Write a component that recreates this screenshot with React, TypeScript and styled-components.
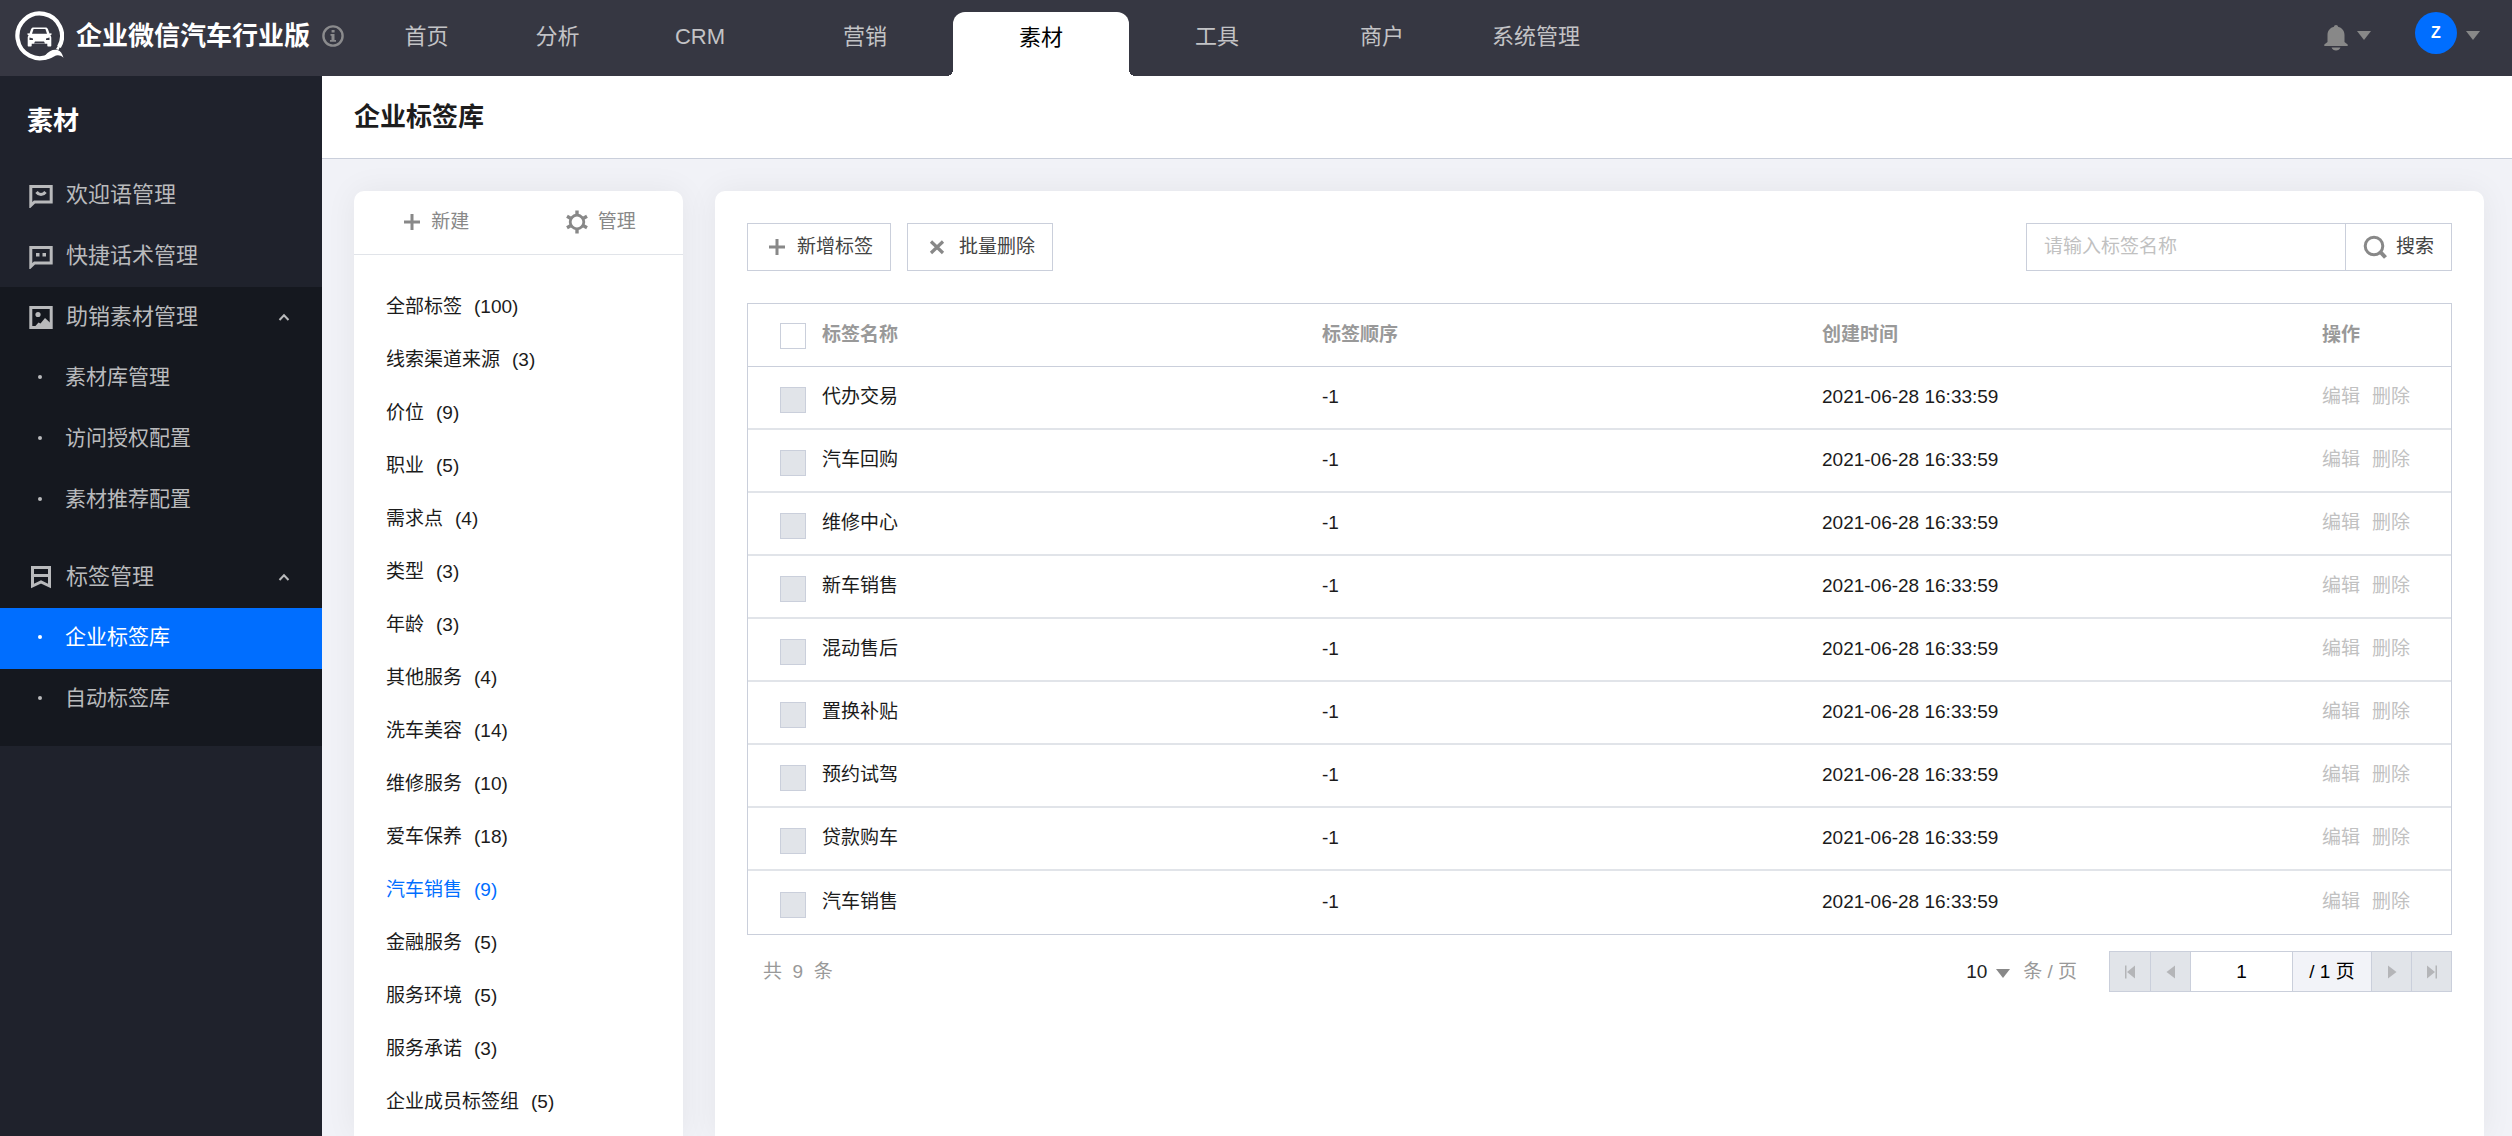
import React from "react";
import styled, { createGlobalStyle, css } from "styled-components";

const c = {
  header: "#363742",
  side: "#1f222c",
  sideDark: "#15181f",
  blue: "#006eff",
  page: "#f1f2f7",
  line: "#cacfdb",
  lineSoft: "#e1e4e9",
  ink: "#1b1b1b",
  gray: "#888888",
  mute: "#c1c1c1",
};

const Global = createGlobalStyle`
  *, *::before, *::after { box-sizing: border-box; }
  html, body { margin: 0; }
  body {
    background: ${c.page};
    color: ${c.ink};
    font-family: "Liberation Sans", "Noto Sans CJK SC", sans-serif;
    font-size: 19px;
    line-height: 28px;
  }
  button, input, select { font: inherit; color: inherit; }
  ul { list-style: none; margin: 0; padding: 0; }
  a { color: inherit; text-decoration: none; }
`;

const Shell = styled.div`
  display: flex;
  flex-direction: column;
  min-height: 100vh;
`;

const TopBar = styled.header`
  display: flex;
  height: 76px;
  background: ${c.header};
  color: #c3c3c6;
`;

const Brand = styled.div`
  display: flex;
  align-items: center;
  width: 361px;
  padding: 0 0 4px 14px;
  svg { flex: none; }
`;

const BrandName = styled.h1`
  margin: 0 12px;
  color: #fff;
  font-size: 26px;
  line-height: 36px;
  font-weight: 700;
  white-space: nowrap;
`;

const Nav = styled.nav`
  display: flex;
`;

const NavLink = styled.a<{ $w: number; $active?: boolean }>`
  width: ${(p) => p.$w}px;
  padding-top: 21px;
  text-align: center;
  font-size: 22px;
  line-height: 32px;
  ${(p) =>
    p.$active &&
    css`
      position: relative;
      margin-top: 12px;
      padding-top: 10px;
      border-radius: 12px 12px 0 0;
      background: #fff;
      color: #000;
      &::before,
      &::after {
        content: "";
        position: absolute;
        bottom: 0;
        width: 6px;
        height: 6px;
      }
      &::before {
        left: -6px;
        background: radial-gradient(circle at 0 0, transparent 6px, #fff 6px);
      }
      &::after {
        right: -6px;
        background: radial-gradient(circle at 100% 0, transparent 6px, #fff 6px);
      }
    `}
`;

const Account = styled.div`
  display: flex;
  align-items: flex-start;
  gap: 44px;
  margin-left: auto;
  padding: 12px 32px 0 0;
`;

const IconButton = styled.button`
  display: flex;
  align-items: center;
  gap: 9px;
  height: 42px;
  padding: 0;
  border: 0;
  background: none;
  && { color: ${c.gray}; }
  svg { margin-top: 4px; }
  svg:first-child { margin-top: 9px; }
`;

const Avatar = styled.span`
  display: grid;
  place-items: center;
  width: 42px;
  height: 42px;
  border-radius: 50%;
  background: ${c.blue};
  color: #fff;
  font-size: 16px;
  font-weight: 700;
`;

const Body = styled.div`
  display: flex;
  flex: 1;
`;

const Sidebar = styled.aside`
  flex: none;
  width: 322px;
  background: ${c.side};
  color: #b9babc;
`;

const SideTitle = styled.h2`
  margin: 0;
  padding: 25px 27px 24px;
  color: #fff;
  font-size: 26px;
  line-height: 40px;
`;

const SideItem = styled.a`
  display: flex;
  align-items: center;
  height: 61px;
  padding: 0 32px 2px 28px;
  font-size: 22px;
  line-height: 32px;
  svg:first-child { flex: none; margin-right: 12px; }
`;

const SideToggle = styled(SideItem).attrs({ as: "button" })`
  width: 100%;
  border: 0;
  background: none;
  color: inherit;
  font-size: 22px;
  text-align: left;
  svg:last-child { margin-left: auto; }
`;

const SideGroup = styled.section`
  padding-bottom: 16px;
  background: ${c.sideDark};
`;

const SubItem = styled.a<{ $active?: boolean }>`
  display: flex;
  align-items: center;
  height: 61px;
  padding: 0 0 4px 38px;
  font-size: 21px;
  background: ${(p) => (p.$active ? c.blue : "transparent")};
  color: ${(p) => (p.$active ? "#fff" : "inherit")};
  &::before {
    content: "";
    width: 4px;
    height: 4px;
    margin-right: 23px;
    border-radius: 2px;
    background: currentColor;
  }
`;

const Main = styled.main`
  display: flex;
  flex-direction: column;
  flex: 1;
  min-width: 0;
`;

const PageTitle = styled.div`
  display: flex;
  align-items: center;
  height: 83px;
  padding: 0 32px;
  border-bottom: 1px solid ${c.line};
  background: #fff;
  h2 { margin: 0; color: #1d1d1d; font-size: 26px; line-height: 40px; }
`;

const Columns = styled.div`
  display: flex;
  flex: 1;
  gap: 32px;
  padding: 32px 28px 0 32px;
`;

const Card = styled.section`
  border-radius: 10px 10px 0 0;
  background: #fff;
  box-shadow: 0 0 32px rgba(0, 0, 0, 0.06);
`;

const GroupCard = styled(Card)`
  flex: none;
  width: 329px;
`;

const GroupTools = styled.div`
  display: flex;
  height: 64px;
  border-bottom: 1px solid ${c.lineSoft};
`;

const GroupTool = styled.button`
  display: flex;
  flex: 1;
  align-items: center;
  justify-content: center;
  gap: 10px;
  padding: 0 0 2px;
  border: 0;
  background: none;
  && { color: ${c.gray}; }
`;

const GroupList = styled.ul`
  padding: 25px 32px 0;
`;

const GroupLink = styled.a<{ $active?: boolean }>`
  display: flex;
  gap: 12px;
  line-height: 53px;
  color: ${(p) => (p.$active ? c.blue : c.ink)};
`;

const TagCard = styled(Card)`
  flex: 1;
  min-width: 0;
  padding: 32px;
`;

const Toolbar = styled.div`
  display: flex;
  gap: 16px;
  margin-bottom: 32px;
`;

const OutlineButton = styled.button`
  display: flex;
  align-items: center;
  gap: 11px;
  height: 48px;
  padding: 0 17px 0 20px;
  border: 1px solid ${c.line};
  background: #fff;
  && { color: #444; }
  svg { color: ${c.gray}; }
`;

const Search = styled.form`
  display: flex;
  margin-left: auto;
  ${OutlineButton} { gap: 9px; border-left: 0; padding: 0 17px; }
`;

const SearchInput = styled.input`
  width: 320px;
  height: 48px;
  padding: 0 17px;
  border: 1px solid ${c.line};
  outline: 0;
  &::placeholder { color: ${c.mute}; opacity: 1; }
`;

const Table = styled.table`
  width: 100%;
  table-layout: fixed;
  border-collapse: separate;
  border-spacing: 0;
  border: 1px solid ${c.line};
  text-align: left;
`;

const Col = styled.col<{ $w?: number }>`
  ${(p) => p.$w && `width: ${p.$w}px;`}
`;

const Th = styled.th`
  height: 63px;
  padding: 0;
  border-bottom: 1px solid ${c.line};
  color: #999;
  font-weight: 700;
`;

const Td = styled.td`
  height: 63px;
  padding: 0 0 2px;
  border-bottom: 2px solid ${c.lineSoft};
  tr:last-child > & { border-bottom: 0; }
`;

const Check = styled.input`
  display: block;
  appearance: none;
  width: 26px;
  height: 26px;
  margin: 2px 0 0 32px;
  border: 1px solid ${c.line};
  background: #fff;
  &:disabled { margin-top: 6px; background: ${c.lineSoft}; }
`;

const RowAction = styled.button`
  margin-right: 12px;
  padding: 0;
  border: 0;
  background: none;
  && { color: ${c.mute}; }
`;

const Footer = styled.div`
  display: flex;
  align-items: center;
  margin-top: 16px;
  padding-left: 16px;
  color: #999;
`;

const PageSize = styled.label`
  display: flex;
  align-items: center;
  margin-left: auto;
  margin-right: 32px;
`;

const SizeSelect = styled.span`
  display: flex;
  align-items: center;
  gap: 8px;
  margin-right: 13px;
  color: ${c.gray};
  select {
    appearance: none;
    width: 22px;
    padding: 0;
    border: 0;
    background: none;
    color: #222;
  }
  svg { margin-top: 4px; }
`;

const Pager = styled.div`
  display: flex;
  height: 41px;
  border: 1px solid ${c.line};
  color: #000;
  && > * + * { border-left: 1px solid ${c.line}; }
`;

const PagerButton = styled.button`
  display: grid;
  place-items: center;
  width: 40px;
  padding: 0;
  border: 0;
  background: ${c.lineSoft};
  && { color: #b4b5b8; }
`;

const PagerInput = styled.input`
  width: 102px;
  padding: 0;
  border: 0;
  text-align: center;
`;

const PagerTotal = styled.span`
  display: grid;
  place-items: center;
  width: 79px;
  background: #f2f3f8;
`;

const Svg = ({ w, h = w, children }: { w: number; h?: number; children: React.ReactNode }) => (
  <svg width={w} height={h} viewBox={`0 0 ${w} ${h}`} fill="none" aria-hidden="true">
    {children}
  </svg>
);

const Logo = () => (
  <Svg w={50}>
    <path d="M36 44.600A22.300 22.300 0 1 1 45 36" stroke="#fff" strokeWidth="4.200" />
    <path
      d="M31 44.500c4-4.500 8-6.500 12.500-5.500 3.200.8 4.500 3.500 6 7.700-3.500-3-6.500-3-9.500-1.200-4 2.300-7.500 3.700-12.500 3.500z"
      fill="#fff"
    />
    <path d="M42 38l3.500-5.500 1.500.8-2.500 5.700z" fill="#fff" />
    <path
      d="M19.500 16.500h12c1.300 0 2 .6 2.400 1.600l1.600 4.400 2-.3v1.600l-1.200.5c.7.700 1 1.500 1 2.700v7.500c0 .7-.4 1-1 1h-2c-.6 0-1-.3-1-1v-1.800H17.700v1.800c0 .7-.4 1-1 1h-2c-.6 0-1-.3-1-1V27c0-1.200.3-2 1-2.700l-1.200-.5v-1.600l2 .3 1.600-4.400c.4-1 1.100-1.600 2.400-1.600z"
      fill="#fff"
    />
    <path d="M19.600 18h11.800l1.600 4.800H18zM21 30.500h9l1 2H20z" fill={c.header} />
    <path d="M15.500 26.500l3.500 1v1.500h-3.500zM35.500 26.500l-3.500 1v1.500h3.500z" fill={c.header} />
  </Svg>
);

const InfoIcon = () => (
  <Svg w={22}>
    <circle cx="11" cy="11" r="9.600" stroke="#8b8b8d" strokeWidth="2.400" />
    <path d="M9.600 5h3v2.600h-3zM8.500 9h4v6h1.500v1.800H8V15h1.500v-4.300h-1z" fill="#8b8b8d" />
  </Svg>
);

const Caret = () => (
  <Svg w={14} h={9}>
    <path d="M0 0h14L7 9z" fill="currentColor" />
  </Svg>
);

const Bell = () => (
  <Svg w={24} h={26}>
    <path
      d="M12 0c1.200 0 2 .8 2 1.800 4 1 6.500 4 6.500 8.200v7l3.200 2.500V21H.3v-1.500L3.500 17v-7c0-4.200 2.500-7.200 6.500-8.200C10 .8 10.800 0 12 0z"
      fill="currentColor"
    />
    <path d="M7.500 22.500h9c-.7 2-2.500 3-4.500 3s-3.800-1-4.500-3z" fill="currentColor" />
  </Svg>
);

const WelcomeIcon = () => (
  <Svg w={26}>
    <path d="M2.800 23.500V4.500h20.400v15.500H6.500z" stroke="currentColor" strokeWidth="3" />
    <path d="M8.500 10c2.500 3.400 6.500 3.400 9 0" stroke="currentColor" strokeWidth="3" />
  </Svg>
);

const ScriptIcon = () => (
  <Svg w={26}>
    <path d="M2.800 23.500V4.500h20.400v15.500H6.500z" stroke="currentColor" strokeWidth="3" />
    <path d="M8 10h3.500v3.500H8zM14.500 10H18v3.500h-3.500z" fill="currentColor" />
  </Svg>
);

const MaterialIcon = () => (
  <Svg w={26}>
    <path d="M2.800 3.500h20.400v20H2.800z" stroke="currentColor" strokeWidth="3" />
    <circle cx="10" cy="10.500" r="2.600" fill="currentColor" />
    <path d="M7 22.500l3.500-4 2 1 4.500-5.500 6.500 6v3.500z" fill="currentColor" />
  </Svg>
);

const LabelIcon = () => (
  <Svg w={26}>
    <path
      d="M4.500 3.500v18.500L13 18l8.500 4V3.500zM4.500 11.500h17"
      stroke="currentColor"
      strokeWidth="3"
    />
  </Svg>
);

const ChevronUp = () => (
  <Svg w={12} h={8}>
    <path d="M1.500 7L6 2.200 10.500 7" stroke="currentColor" strokeWidth="2" />
  </Svg>
);

const Plus = () => (
  <Svg w={18}>
    <path d="M9 1v16M1 9h16" stroke="currentColor" strokeWidth="3" />
  </Svg>
);

const Cross = () => (
  <Svg w={20} h={16}>
    <path d="M3 2.500l12 11.500M15 2.500L3 14" stroke="currentColor" strokeWidth="3.200" />
  </Svg>
);

const Gear = () => (
  <Svg w={22} h={24}>
    <circle cx="11" cy="12" r="6.800" stroke="currentColor" strokeWidth="2.800" />
    <path
      d="M11 .5v4M11 19.500v4M1 6.300l3.500 2M17.500 15.700l3.500 2M1 17.700l3.500-2M17.500 8.300l3.500-2"
      stroke="currentColor"
      strokeWidth="3.400"
    />
  </Svg>
);

const Magnifier = () => (
  <Svg w={24}>
    <circle cx="11" cy="11" r="8.800" stroke="currentColor" strokeWidth="3" />
    <path d="M16.500 16l6 6.500" stroke="currentColor" strokeWidth="4" />
  </Svg>
);

const Arrow = ({ dir, edge }: { dir: "left" | "right"; edge?: boolean }) => (
  <Svg w={12} h={14}>
    {dir === "left" ? (
      <path d={edge ? "M11 .5v13L3 7zM1 .5h1.500v13H1z" : "M10 .5v13L1.500 7z"} fill="currentColor" />
    ) : (
      <path d={edge ? "M1 .5v13L9 7zM9.500 .5H11v13H9.500z" : "M2 .5v13L10.500 7z"} fill="currentColor" />
    )}
  </Svg>
);

const navItems = [
  { label: "首页", w: 131 },
  { label: "分析", w: 131 },
  { label: "CRM", w: 154 },
  { label: "营销", w: 176 },
  { label: "素材", w: 176, active: true },
  { label: "工具", w: 176 },
  { label: "商户", w: 154 },
  { label: "系统管理", w: 154 },
];

const groups: [string, number][] = [
  ["全部标签", 100],
  ["线索渠道来源", 3],
  ["价位", 9],
  ["职业", 5],
  ["需求点", 4],
  ["类型", 3],
  ["年龄", 3],
  ["其他服务", 4],
  ["洗车美容", 14],
  ["维修服务", 10],
  ["爱车保养", 18],
  ["汽车销售", 9],
  ["金融服务", 5],
  ["服务环境", 5],
  ["服务承诺", 3],
  ["企业成员标签组", 5],
];

const tags = [
  "代办交易",
  "汽车回购",
  "维修中心",
  "新车销售",
  "混动售后",
  "置换补贴",
  "预约试驾",
  "贷款购车",
  "汽车销售",
];

export default function App() {
  return (
    <Shell>
      <Global />
      <TopBar>
        <Brand>
          <Logo />
          <BrandName>企业微信汽车行业版</BrandName>
          <InfoIcon />
        </Brand>
        <Nav>
          {navItems.map((n) => (
            <NavLink key={n.label} href="#" $w={n.w} $active={n.active}>
              {n.label}
            </NavLink>
          ))}
        </Nav>
        <Account>
          <IconButton aria-label="通知">
            <Bell />
            <Caret />
          </IconButton>
          <IconButton aria-label="账号">
            <Avatar>Z</Avatar>
            <Caret />
          </IconButton>
        </Account>
      </TopBar>

      <Body>
        <Sidebar>
          <SideTitle>素材</SideTitle>
          <SideItem href="#">
            <WelcomeIcon />
            欢迎语管理
          </SideItem>
          <SideItem href="#">
            <ScriptIcon />
            快捷话术管理
          </SideItem>
          <SideGroup>
            <SideToggle>
              <MaterialIcon />
              助销素材管理
              <ChevronUp />
            </SideToggle>
            <SubItem href="#">素材库管理</SubItem>
            <SubItem href="#">访问授权配置</SubItem>
            <SubItem href="#">素材推荐配置</SubItem>
          </SideGroup>
          <SideGroup>
            <SideToggle>
              <LabelIcon />
              标签管理
              <ChevronUp />
            </SideToggle>
            <SubItem href="#" $active>
              企业标签库
            </SubItem>
            <SubItem href="#">自动标签库</SubItem>
          </SideGroup>
        </Sidebar>

        <Main>
          <PageTitle>
            <h2>企业标签库</h2>
          </PageTitle>
          <Columns>
            <GroupCard>
              <GroupTools>
                <GroupTool>
                  <Plus />
                  新建
                </GroupTool>
                <GroupTool>
                  <Gear />
                  管理
                </GroupTool>
              </GroupTools>
              <GroupList>
                {groups.map(([name, count]) => (
                  <li key={name}>
                    <GroupLink href="#" $active={name === "汽车销售"}>
                      <span>{name}</span>
                      <span>({count})</span>
                    </GroupLink>
                  </li>
                ))}
              </GroupList>
            </GroupCard>

            <TagCard>
              <Toolbar>
                <OutlineButton>
                  <Plus />
                  新增标签
                </OutlineButton>
                <OutlineButton>
                  <Cross />
                  批量删除
                </OutlineButton>
                <Search onSubmit={(e) => e.preventDefault()}>
                  <SearchInput aria-label="标签名称" placeholder="请输入标签名称" />
                  <OutlineButton type="submit">
                    <Magnifier />
                    搜索
                  </OutlineButton>
                </Search>
              </Toolbar>

              <Table>
                <colgroup>
                  <Col $w={74} />
                  <Col />
                  <Col />
                  <Col />
                  <Col $w={129} />
                </colgroup>
                <thead>
                  <tr>
                    <Th>
                      <Check type="checkbox" aria-label="全选" />
                    </Th>
                    <Th>标签名称</Th>
                    <Th>标签顺序</Th>
                    <Th>创建时间</Th>
                    <Th>操作</Th>
                  </tr>
                </thead>
                <tbody>
                  {tags.map((t) => (
                    <tr key={t}>
                      <Td>
                        <Check type="checkbox" disabled aria-label={t} />
                      </Td>
                      <Td>{t}</Td>
                      <Td>-1</Td>
                      <Td>2021-06-28 16:33:59</Td>
                      <Td>
                        <RowAction disabled>编辑</RowAction>
                        <RowAction disabled>删除</RowAction>
                      </Td>
                    </tr>
                  ))}
                </tbody>
              </Table>

              <Footer>
                <span>共&nbsp; 9&nbsp; 条</span>
                <PageSize>
                  <SizeSelect>
                    <select defaultValue="10">
                      <option>10</option>
                      <option>20</option>
                    </select>
                    <Caret />
                  </SizeSelect>
                  条 / 页
                </PageSize>
                <Pager>
                  <PagerButton disabled aria-label="第一页">
                    <Arrow dir="left" edge />
                  </PagerButton>
                  <PagerButton disabled aria-label="上一页">
                    <Arrow dir="left" />
                  </PagerButton>
                  <PagerInput aria-label="页码" defaultValue="1" />
                  <PagerTotal>/ 1 页</PagerTotal>
                  <PagerButton disabled aria-label="下一页">
                    <Arrow dir="right" />
                  </PagerButton>
                  <PagerButton disabled aria-label="最后一页">
                    <Arrow dir="right" edge />
                  </PagerButton>
                </Pager>
              </Footer>
            </TagCard>
          </Columns>
        </Main>
      </Body>
    </Shell>
  );
}
